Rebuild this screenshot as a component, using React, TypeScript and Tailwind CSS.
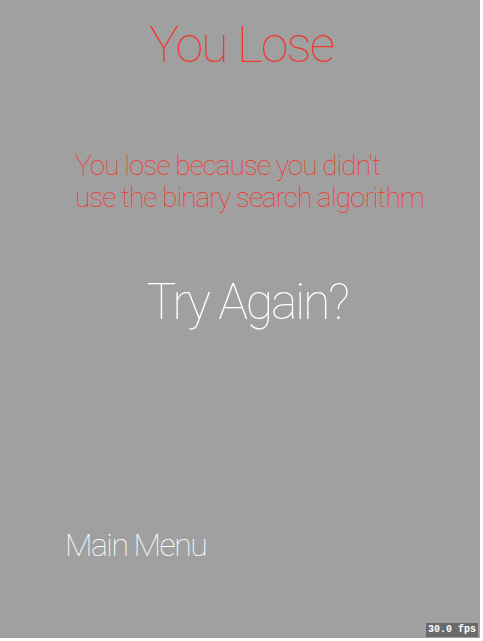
export default function App() {
  return (
    <div className="w-[483px] h-[641px] bg-white">
      <div
        className="relative w-[480px] h-[638px] bg-[#a0a0a0] flex flex-col"
        style={{ fontFamily: "Roboto, 'Liberation Sans', sans-serif" }}
      >
        <h1 className="mt-[15px] self-center pl-[2px] text-[50px] leading-[60px] tracking-[-1.8px] font-thin text-[#f2382e]">
          You Lose
        </h1>
        <p className="mt-[75px] pl-[75px] text-[28px] leading-[32px] tracking-[-1px] font-thin text-[#f2382e]">
          You lose because you didn&apos;t
          <br />
          use the binary search algorithm
        </p>
        <button className="mt-[58px] self-center pl-[14px] text-[50px] leading-[60px] tracking-[-2.3px] font-thin text-white">
          Try Again?
        </button>
        <button className="mt-auto mb-[73px] ml-[65px] self-start text-[32px] leading-[40px] tracking-[-1.5px] font-thin text-white">
          Main Menu
        </button>
        <span className="absolute right-[2px] bottom-[1px] px-[2px] bg-[#6a6a6a] text-white text-[10px] leading-[14px] font-bold font-mono">
          30.0 fps
        </span>
      </div>
    </div>
  );
}
